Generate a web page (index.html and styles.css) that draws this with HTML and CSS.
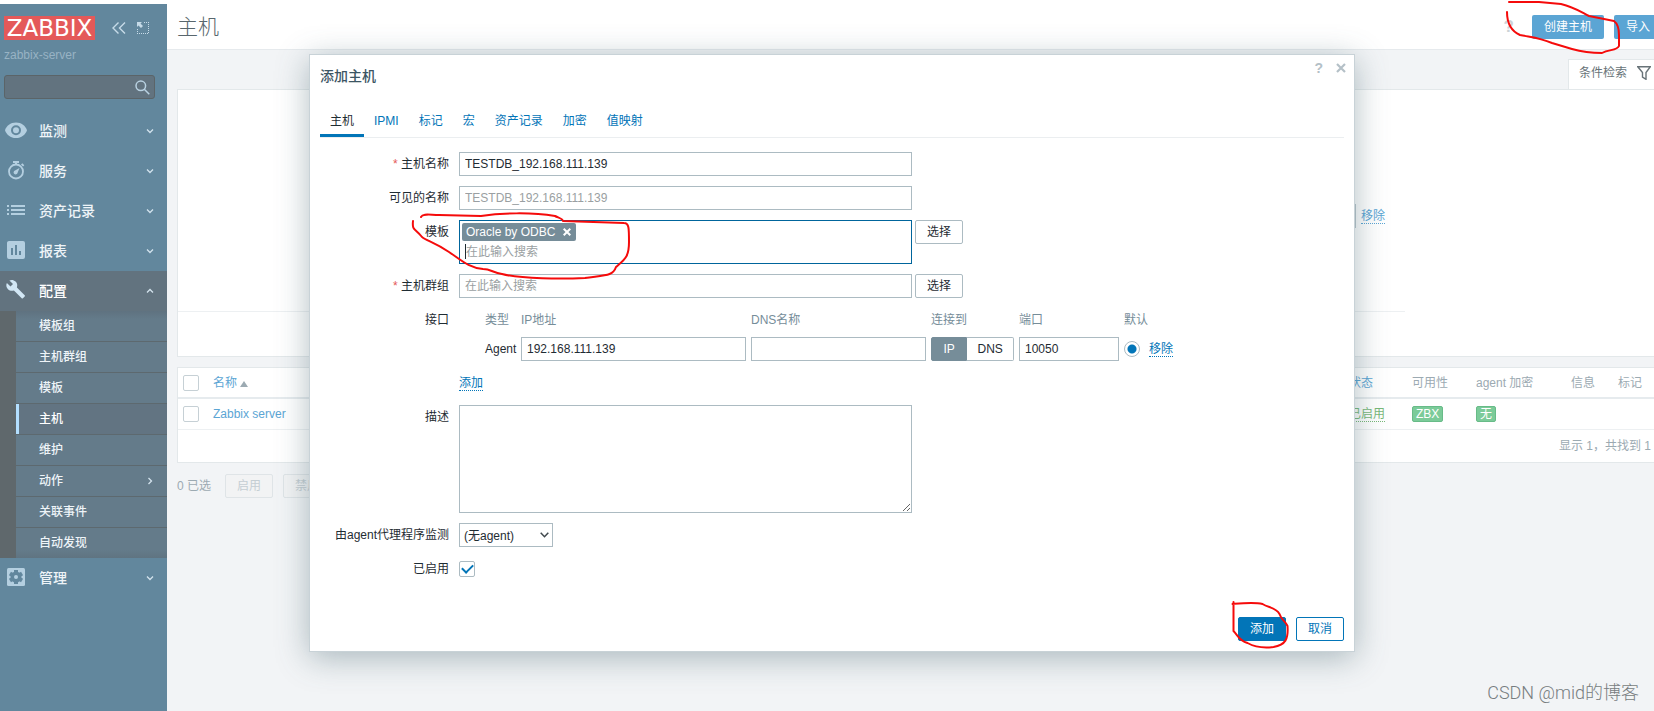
FILE: index.html
```html
<!DOCTYPE html>
<html lang="zh-CN">
<head>
<meta charset="utf-8">
<title>主机</title>
<link rel="stylesheet" href="styles.css">
</head>
<body>
<div class="app">
  <aside class="sidebar">
    <div class="brand">
      <a class="logo" href="#">ZABBIX</a>
      <button class="icon-btn" type="button" aria-label="收起侧边栏">
        <svg width="14" height="12" viewBox="0 0 14 12" fill="none" stroke="currentColor" stroke-width="1.4"><path d="M6.5 .5 1 6l5.500 5.500M13 .5 7.500 6l5.500 5.500"/></svg>
      </button>
      <button class="icon-btn" type="button" aria-label="隐藏侧边栏">
        <svg width="12" height="12" viewBox="0 0 12 12" fill="currentColor"><path d="M0 0h5L3.500 1.500 6 4 4 6 1.500 3.500 0 5z"/><path fill="none" stroke="currentColor" stroke-dasharray="1 1" d="M7 .5h5M11.500 2v10M0 11.500h11M.5 7v4"/></svg>
      </button>
    </div>
    <div class="server">zabbix-server</div>
    <form class="search">
      <input type="text" aria-label="搜索">
      <button type="button" aria-label="搜索">
        <svg width="15" height="15" viewBox="0 0 15 15" fill="none" stroke="currentColor" stroke-width="1.5"><circle cx="5.800" cy="5.800" r="4.800"/><path d="m9.300 9.300 5 5"/></svg>
      </button>
    </form>
    <nav class="menu">
      <a class="item" href="#">
        <svg class="ico" viewBox="0 0 24 24"><path fill-rule="evenodd" d="M12 3.500C6.500 3.500 2.500 6.800 1 11.200c1.500 4.500 5.500 7.800 11 7.800s9.500-3.300 11-7.800c-1.500-4.400-5.500-7.700-11-7.700zm0 12.700a5 5 0 1 1 0-10 5 5 0 0 1 0 10zm0-2a3 3 0 1 0 0-6 3 3 0 0 0 0 6z"/></svg>
        <span>监测</span><svg class="chev" viewBox="0 0 8 8"><path d="m1 2.500 3 3 3-3"/></svg></a>
      <a class="item" href="#">
        <svg class="ico" viewBox="0 0 24 24"><circle cx="12" cy="12.500" r="7" fill="none" stroke="currentColor" stroke-width="1.800"/><path d="M9 2h6v2h-2v2h-2V4H9zM17 5.500l1.300-1.300 2 2-1.300 1.300zM15.500 9l-2 5A2 2 0 1 1 11 11.500z"/></svg>
        <span>服务</span><svg class="chev" viewBox="0 0 8 8"><path d="m1 2.500 3 3 3-3"/></svg></a>
      <a class="item" href="#">
        <svg class="ico" viewBox="0 0 24 24"><path d="M3 6h2v2H3zM7 6h14v2H7zM3 10h2v2H3zM7 10h14v2H7zM3 14h2v2H3zM7 14h14v2H7z"/></svg>
        <span>资产记录</span><svg class="chev" viewBox="0 0 8 8"><path d="m1 2.500 3 3 3-3"/></svg></a>
      <a class="item" href="#">
        <svg class="ico" viewBox="0 0 24 24"><path fill-rule="evenodd" d="M5 2h14a2 2 0 0 1 2 2v14a2 2 0 0 1-2 2H5a2 2 0 0 1-2-2V4c0-1.100.9-2 2-2zm2 7v7h2V9zm4-3v10h2V6zm4 6v4h2v-4z"/></svg>
        <span>报表</span><svg class="chev" viewBox="0 0 8 8"><path d="m1 2.500 3 3 3-3"/></svg></a>
      <a class="item open" href="#">
        <svg class="ico" viewBox="0 0 24 24"><path d="M20.700 16.300 12.900 8.500c.8-2 .3-4.300-1.300-5.900C9.900.9 7.400.6 5.400 1.500L9 5.100 6.500 7.600 2.900 4C1.800 6 2.300 8.500 4 10.200c1.600 1.600 3.900 2 5.900 1.300l7.800 7.800c.3.3.9.3 1.200 0l1.800-1.800c.4-.3.4-.9 0-1.200z"/></svg>
        <span>配置</span><svg class="chev" viewBox="0 0 8 8"><path d="m1 5.500 3-3 3 3"/></svg></a>
      <div class="submenu">
        <a href="#">模板组</a>
        <a href="#">主机群组</a>
        <a href="#">模板</a>
        <a class="current" href="#">主机</a>
        <a href="#">维护</a>
        <a href="#">动作<svg class="chev" viewBox="0 0 8 8"><path d="m2.500 1 3 3-3 3"/></svg></a>
        <a href="#">关联事件</a>
        <a href="#">自动发现</a>
      </div>
      <a class="item" href="#">
        <svg class="ico" viewBox="0 0 24 24"><rect x="3" y="2" width="18" height="18" rx="1.500"/><g fill="#62879d"><circle cx="12" cy="11" r="5.500"/><path d="M10 4h4v14h-4z"/><path d="M10 4h4v14h-4z" transform="rotate(60 12 11)"/><path d="M10 4h4v14h-4z" transform="rotate(120 12 11)"/></g><circle cx="12" cy="11" r="2"/></svg>
        <span>管理</span><svg class="chev" viewBox="0 0 8 8"><path d="m1 2.500 3 3 3-3"/></svg></a>
    </nav>
  </aside>

  <main class="main">
    <div class="page">
      <header class="page-head">
        <h1>主机</h1>
        <a class="help" href="#">?</a>
        <button class="soft-btn" type="button">创建主机</button>
        <button class="soft-btn" type="button">导入</button>
      </header>
      <div class="filter-tabs">
        <a class="filter-tab" href="#">条件检索
          <svg width="14" height="14" viewBox="0 0 14 14" fill="none" stroke="currentColor" stroke-width="1.400"><path d="M.8.8h12.400L9 6.500v6.800L5.500 11V6.500z"/></svg></a>
      </div>
      <section class="filter">
        <div class="filter-body">
          <input type="text" aria-label="标记值">
          <a class="dotted" href="#">移除</a>
        </div>
      </section>
      <table class="list">
        <colgroup><col class="c-check"><col><col class="c-status"><col class="c-avail"><col class="c-enc"><col class="c-info"><col class="c-tags"></colgroup>
        <thead><tr>
          <th><input class="check" type="checkbox" aria-label="全选"></th>
          <th><a href="#">名称 <i class="sort"></i></a></th>
          <th><a href="#">状态</a></th><th>可用性</th><th>agent 加密</th><th>信息</th><th>标记</th>
        </tr></thead>
        <tbody><tr>
          <td><input class="check" type="checkbox" aria-label="Zabbix server"></td>
          <td><a href="#">Zabbix server</a></td>
          <td><a class="dotted green" href="#">已启用</a></td>
          <td><span class="badge">ZBX</span></td>
          <td><span class="badge">无</span></td><td></td><td></td>
        </tr></tbody>
        <tfoot><tr><td class="total" colspan="7">显示 1，共找到 1</td></tr></tfoot>
      </table>
      <div class="bulk">
        <span>0 已选</span>
        <button type="button" disabled>启用</button>
        <button type="button" disabled>禁用</button>
      </div>
    </div>
  </main>
</div>

<section class="dialog" role="dialog" aria-labelledby="dlg-title">
  <header class="dlg-head">
    <h2 id="dlg-title">添加主机</h2>
    <a class="dlg-help" href="#">?</a>
    <button class="dlg-close" type="button" aria-label="关闭"><svg width="10" height="10" viewBox="0 0 10 10" fill="none" stroke="currentColor" stroke-width="2.200"><path d="m1 1 8 8M9 1 1 9"/></svg></button>
  </header>
  <nav class="tabs">
    <a class="on" href="#">主机</a><a href="#">IPMI</a><a href="#">标记</a><a href="#">宏</a><a href="#">资产记录</a><a href="#">加密</a><a href="#">值映射</a>
  </nav>
  <form class="form">
    <label class="req" for="host">主机名称</label>
    <div class="field"><input id="host" class="box wide" type="text" value="TESTDB_192.168.111.139"></div>

    <label for="visible">可见的名称</label>
    <div class="field"><input id="visible" class="box wide" type="text" placeholder="TESTDB_192.168.111.139"></div>

    <label for="tpl">模板</label>
    <div class="field">
      <div class="multi wide">
        <span class="chip">Oracle by ODBC<button type="button" aria-label="移除 Oracle by ODBC"><svg width="8" height="8" viewBox="0 0 8 8" fill="none" stroke="currentColor" stroke-width="2"><path d="m.7.7 6.600 6.600M7.300.7.700 7.300"/></svg></button></span>
        <div class="caret"><input id="tpl" type="text" placeholder="在此输入搜索"></div>
      </div>
      <button class="btn" type="button">选择</button>
    </div>

    <label class="req" for="groups">主机群组</label>
    <div class="field"><input id="groups" class="box wide" type="text" placeholder="在此输入搜索"><button class="btn" type="button">选择</button></div>

    <span class="label">接口</span>
    <div class="ifaces">
      <div class="grid head"><span>类型</span><span>IP地址</span><span>DNS名称</span><span>连接到</span><span>端口</span><span>默认</span></div>
      <div class="grid">
        <span>Agent</span>
        <input class="box" type="text" value="192.168.111.139" aria-label="IP地址">
        <input class="box" type="text" aria-label="DNS名称">
        <div class="seg" role="radiogroup" aria-label="连接到">
          <label><input type="radio" name="useip" checked><span>IP</span></label><label><input type="radio" name="useip"><span>DNS</span></label>
        </div>
        <input class="box" type="text" value="10050" aria-label="端口">
        <div class="default"><input class="radio" type="radio" name="main" checked aria-label="默认"><a class="dotted" href="#">移除</a></div>
      </div>
      <div class="add"><a class="dotted" href="#">添加</a></div>
    </div>

    <label for="desc">描述</label>
    <div class="field"><textarea id="desc" class="wide"></textarea></div>

    <label for="proxy">由agent代理程序监测</label>
    <div class="field"><div class="select"><select id="proxy"><option>(无agent)</option></select><svg width="9" height="6" viewBox="0 0 9 6" fill="none" stroke="currentColor" stroke-width="1.500"><path d="m.7.7 3.800 4 3.800-4"/></svg></div></div>

    <label for="enabled">已启用</label>
    <div class="field"><input id="enabled" class="check" type="checkbox" checked></div>
  </form>
  <footer class="dlg-foot">
    <button class="primary" type="button">添加</button>
    <button class="outline" type="button">取消</button>
  </footer>
</section>

<svg class="ink" width="1654" height="711" viewBox="0 0 1654 711" fill="none" stroke="#f50b0b" stroke-width="2" stroke-linecap="round" stroke-linejoin="round" aria-hidden="true">
  <path d="M1509 2h30l22 2c13 3 20 8 28 12l25 5c4 3 5 7 5 14v11c-2 5-10 3-17 7-7 0-16 0-30-4l-20-6c-12-5-16-5-32-8-9-4-13-11-13-23"/>
  <path d="M421 217c2-4 9-2 18-2l42 1c20-3 50-4 74 0 4 2 8 3 8 5l61 2c5 0 5 5 5 19 0 15-4 17-13 25-3 9-10 8-31 11-22 1-65 1-83-4-9-1-11-5-19-5-14-1-22-9-34-17-15-10-22-11-27-15-7-9-10-6-9-16"/>
  <path d="M1233.500 602v29c5 5 5 9 14 12 9 5 18 5 26 4 12-2 15-8 14-21-3-6-6-6-8-12-4-7-11-6-17-10-8-2-18-1-30 0"/>
</svg>
<div class="credit">CSDN @mid的博客</div>
</body>
</html>
```
FILE: styles.css
```css
* { box-sizing: border-box; }
body {
  margin: 0;
  padding-top: 4px;
  height: 100vh;
  overflow: hidden;
  position: relative;
  background: #fff;
  color: #1f2c33;
  font: 12px/24px "Liberation Sans", Arial, "Noto Sans CJK SC", sans-serif;
}
a { color: #0275b8; text-decoration: none; }
input, button, select, textarea { font: inherit; color: inherit; margin: 0; }
button { cursor: pointer; }
svg { display: block; flex: none; }

.app { display: flex; height: 100%; }

/* Sidebar */
.sidebar { width: 167px; flex: none; background: #62879d; color: #fff; }
.brand { display: flex; align-items: center; padding: 12px 4px 0; }
.logo {
  width: 91px; height: 24px; margin-right: 17px;
  background: #e45959; color: #fff;
  font-family: "DejaVu Sans", sans-serif; font-size: 23px; line-height: 24px; text-align: center;
}
.icon-btn { padding: 0; border: 0; background: none; color: #c6dbe8; }
.icon-btn + .icon-btn { margin-left: 11px; }
.server { padding: 5px 4px 0; line-height: 20px; color: #98b3c4; }
.search {
  display: flex; align-items: center;
  width: 151px; height: 24px; margin: 10px 4px 12px;
  background: #62737f; border: 1px solid #5b6468; border-radius: 3px;
}
.search input { flex: 1; min-width: 0; height: 22px; border: 0; background: none; outline: 0; }
.search button { padding: 0 4px; border: 0; background: none; color: #b9d2e2; }
.item {
  display: flex; align-items: center; height: 40px; padding: 0 13px 0 4px;
  color: #eef4f8; font-size: 14px; font-weight: 500;
}
.item span { flex: 1; margin-left: 11px; }
.ico { width: 24px; height: 24px; fill: currentColor; color: #b4cfe0; }
.chev { width: 8px; height: 8px; fill: none; stroke: #d3e3ed; stroke-width: 1.3; }
.item.open { background: #62737f; color: #fff; }
.item.open .ico { color: #d2e7f5; }
.submenu {
  border-left: 16px solid #5f686c;
  background: #5d696f;
  display: grid; gap: 1px;
}
.submenu a {
  display: flex; align-items: center; justify-content: space-between;
  height: 30px; padding: 0 13px 0 23px;
  background: #647b8a; color: #eef4f8; font-weight: 500;
}
.submenu a:first-child { background: linear-gradient(#5f7280, #647b8a 8px); }
.submenu a:last-child { background: linear-gradient(#647b8a 22px, #607481); }
.submenu .current { background: #627482; border-left: 3px solid #b3dfff; padding-left: 20px; color: #fff; }

/* Page behind the dialog */
.main { flex: 1; min-width: 0; overflow: hidden; background: #f2f4f6; }
.page { width: calc(100% + 18px); }
.page-head {
  display: flex; align-items: center; gap: 10px;
  height: 46px; padding: 0 10px;
  background: #fff; border-bottom: 1px solid #e6eaed;
}
h1 { flex: 1; margin: 0; font-size: 21px; font-weight: 300; color: #58666d; }
.help { font-size: 17px; font-weight: bold; color: #ccd3d7; margin-right: 8px; }
.soft-btn { height: 24px; padding: 0 12px; border: 0; border-radius: 2px; background: #5ba5d4; color: #fff; }
.filter-tabs { display: flex; justify-content: flex-end; padding: 9px 10px 0; }
.filter-tab {
  display: flex; align-items: center; gap: 10px;
  height: 30px; padding: 0 10px 4px; background: #fff; color: #687378;
  border: 1px solid #e3e8ea; border-bottom: 0;
}
.filter { margin: 0 10px 10px; height: 268px; background: #fff; border: 1px solid #e3e8ea; }
.filter-body {
  display: flex; justify-content: flex-end; gap: 5px;
  margin-right: 256px; padding: 114px 20px 83px; border-bottom: 1px solid #edf0f2;
}
.filter-body input { width: 250px; height: 24px; border: 1px solid #bcc8ce; }
.dotted { line-height: 14px; border-bottom: 1px dotted currentColor; align-self: center; }
.page .dotted { color: #5ba5d4; }
.page .green { color: #78b978; }

.list {
  width: calc(100% - 20px); margin: 0 10px; table-layout: fixed;
  border-collapse: separate; border-spacing: 0;
  background: #fff; border: 1px solid #e3e8ea; color: #9caab2;
}
.list a { color: #5ba5d4; }
.list th, .list td { padding: 0 5px; text-align: left; font-weight: normal; white-space: nowrap; }
.list th { height: 31px; border-bottom: 2px solid #e6ebee; }
.list td { height: 31px; border-bottom: 1px solid #edf0f2; }
.list th:first-child, .list td:first-child { padding-right: 0; }
.list td.total:first-child { height: 32px; border: 0; text-align: right; padding-right: 10px; }
.c-check { width: 30px; }
.c-status { width: 63px; }
.c-avail { width: 64px; }
.c-enc { width: 95px; }
.c-info { width: 47px; }
.c-tags { width: 48px; }
.sort { display: inline-block; border: 4px solid transparent; border-top: 0; border-bottom: 6px solid #9caab2; }
.badge {
  display: inline-block; height: 16px; padding: 0 3px; line-height: 14px;
  background: #7bcb99; border: 1px solid #68bb88; border-radius: 2px; color: #fff;
}
.bulk { display: flex; align-items: center; gap: 10px; padding: 11px 10px; color: #9caab2; }
.bulk span { margin-right: 4px; }
.bulk button { height: 24px; padding: 0 11px; line-height: 22px; border: 1px solid #dfe4e7; border-radius: 2px; background: #f2f3f4; color: #c5ced3; }

/* Shared controls */
.check, .radio {
  appearance: none; display: block; width: 16px; height: 16px; flex: none;
  border: 1px solid #acbbc2; border-radius: 2px; background: #fff;
}
.page .check { border-color: #c6d0d5; }
.radio { border-radius: 50%; border-color: #acbbc2; }
.radio:checked { background: radial-gradient(circle, #0275b8 4px, #fff 5px); }
.check:checked { display: grid; place-items: center; }
.check:checked::before {
  content: ""; width: 9px; height: 5px; margin-bottom: 3px;
  border: solid #0275b8; border-width: 0 0 2px 2px; transform: rotate(-45deg);
}
.box { height: 24px; padding: 0 5px; border: 1px solid #acbbc2; background: #fff; outline: 0; min-width: 0; }
::placeholder { color: #9a9fa2; opacity: 1; }
.btn, .primary, .outline { height: 24px; padding: 0 11px; line-height: 22px; border: 1px solid #acbbc2; border-radius: 2px; background: #fff; }
.primary { background: #0275b8; border-color: #0275b8; color: #fff; }
.outline { border-color: #0275b8; color: #0275b8; }

/* Dialog */
.dialog {
  position: absolute; top: 54px; left: 309px; right: 299px;
  padding: 0 10px 10px; background: #fff; border: 1px solid #c8d2d7;
  box-shadow: 0 6px 30px rgba(70, 100, 110, .42);
}
.dlg-head { display: flex; height: 50px; gap: 13px; }
h2 { flex: 1; margin: 9px 0 0; font-size: 14px; line-height: 24px; font-weight: 500; color: #3c5563; }
.dlg-help { font-size: 14px; font-weight: bold; line-height: 26px; color: #b4c0c7; }
.dlg-close { align-self: flex-start; height: 26px; padding: 0; margin-right: -2px; border: 0; background: none; color: #b4c0c7; }
.tabs { display: flex; border-bottom: 1px solid #ebeef0; }
.tabs a { height: 32px; padding: 0 10px; line-height: 32px; }
.tabs .on { color: #1f2c33; border-bottom: 3px solid #0275b8; }
.form { display: grid; grid-template-columns: 129px 1fr; gap: 10px; margin-top: 14px; }
.form > label, .label { text-align: right; white-space: nowrap; height: 24px; }
.req::before { content: "* "; color: #e45959; }
.field { display: flex; gap: 3px; align-items: flex-start; }
.wide { width: 453px; }
.multi { border: 1px solid #00659c; padding: 2px; display: flex; flex-direction: column; align-items: flex-start; height: 44px; }
.chip {
  display: flex; align-items: center; gap: 8px; height: 18px; padding: 0 5px 0 4px;
  background: #768d99; color: #fff; border-radius: 2px; line-height: 18px;
}
.chip button { padding: 0; border: 0; background: none; }
.caret { margin-left: 3px; border-left: 1px solid #1f2c33; height: 15px; margin-top: 3px; display: flex; }
.caret input { border: 0; padding: 0; width: 300px; height: 15px; outline: 0; }
.grid {
  display: grid; grid-template-columns: 31px 225px 175px 83px 100px auto; column-gap: 5px;
  padding-left: 26px; margin-bottom: 10px;
}
.head { color: #768d99; margin-bottom: 5px; }
.default { display: flex; align-items: center; gap: 9px; }
.seg { display: flex; }
.seg label { flex: 4; text-align: center; line-height: 22px; border: 1px solid #acbbc2; border-radius: 0 2px 2px 0; }
.seg label:first-child { flex: 3; background: #768d99; border-color: #768d99; color: #fff; border-radius: 2px 0 0 2px; }
.seg label:last-child { border-left: 0; }
.seg input { position: absolute; opacity: 0; }
.add { height: 24px; display: flex; }
textarea { display: block; height: 108px; border: 1px solid #acbbc2; outline: 0; resize: vertical; }
.select { position: relative; width: 94px; }
.select select { appearance: none; display: block; width: 100%; height: 24px; padding: 0 4px; border: 1px solid #acbbc2; border-radius: 0; background: #fff; }
.select svg { position: absolute; right: 4px; top: 9px; pointer-events: none; color: #40484d; }
.field .check { margin: 4px 0; }
.dlg-foot { display: flex; justify-content: flex-end; gap: 10px; margin-top: 36px; }

/* Layers over the page */
.ink { position: absolute; top: 0; left: 0; pointer-events: none; }
.credit {
  position: absolute; right: 15px; bottom: 6px;
  font-family: Roboto, "Noto Sans CJK SC", sans-serif; font-size: 18px; font-weight: 300; color: #777d80;
}
```
